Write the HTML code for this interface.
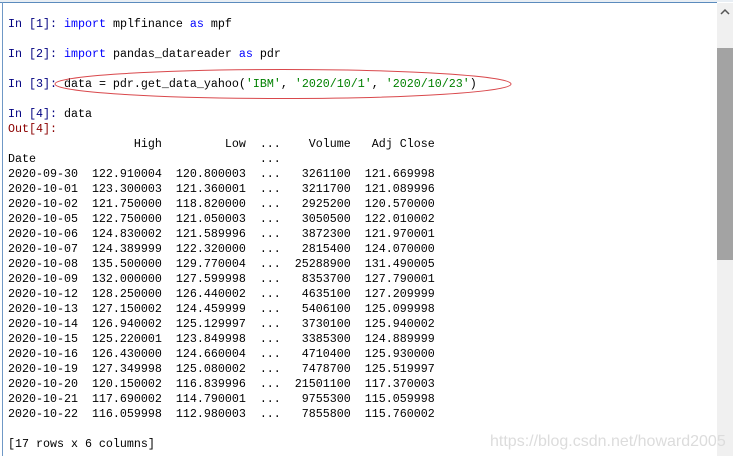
<!DOCTYPE html>
<html><head><meta charset="utf-8"><style>
html,body{margin:0;padding:0;background:#fff;width:733px;height:456px;overflow:hidden;position:relative}
.top{position:absolute;left:0;top:0;width:733px;height:2px;background:#e8eef4}
.topl{position:absolute;left:0;top:2px;width:717px;height:1px;background:#5b8bbd}
.left{position:absolute;left:2px;top:2px;width:1px;height:454px;background:#6f98c6}
.sb{position:absolute;left:717px;top:3px;width:16px;height:453px;background:#f0f0f0}
.thumb{position:absolute;left:717px;top:48px;width:16px;height:212px;background:#a3a3a3}
pre{position:absolute;left:8px;top:17px;margin:0;font-family:"Liberation Mono",monospace;font-size:11.67px;line-height:15px;color:#000}
.p{color:#000080}.k{color:#0000ff}.s{color:#008000}.o{color:#8b0000}
.wm{position:absolute;left:490px;top:433px;font-family:"Liberation Sans",sans-serif;font-size:16px;color:#dcdcdc}
</style></head><body>
<div class="top"></div><div class="topl"></div><div class="left"></div>
<div class="sb"></div><div class="thumb"></div>
<svg style="position:absolute;left:717px;top:6px" width="16" height="12"><path d="M4 8 L8 4 L12 8" stroke="#555" stroke-width="1.5" fill="none"/></svg>
<pre><span class="p">In [1]:</span> <span class="k">import</span> mplfinance <span class="k">as</span> mpf

<span class="p">In [2]:</span> <span class="k">import</span> pandas_datareader <span class="k">as</span> pdr

<span class="p">In [3]:</span> data = pdr.get_data_yahoo(<span class="s">'IBM'</span>, <span class="s">'2020/10/1'</span>, <span class="s">'2020/10/23'</span>)

<span class="p">In [4]:</span> data
<span class="o">Out[4]:</span>
                  High         Low  ...    Volume   Adj Close
Date                                ...
2020-09-30  122.910004  120.800003  ...   3261100  121.669998
2020-10-01  123.300003  121.360001  ...   3211700  121.089996
2020-10-02  121.750000  118.820000  ...   2925200  120.570000
2020-10-05  122.750000  121.050003  ...   3050500  122.010002
2020-10-06  124.830002  121.589996  ...   3872300  121.970001
2020-10-07  124.389999  122.320000  ...   2815400  124.070000
2020-10-08  135.500000  129.770004  ...  25288900  131.490005
2020-10-09  132.000000  127.599998  ...   8353700  127.790001
2020-10-12  128.250000  126.440002  ...   4635100  127.209999
2020-10-13  127.150002  124.459999  ...   5406100  125.099998
2020-10-14  126.940002  125.129997  ...   3730100  125.940002
2020-10-15  125.220001  123.849998  ...   3385300  124.889999
2020-10-16  126.430000  124.660004  ...   4710400  125.930000
2020-10-19  127.349998  125.080002  ...   7478700  125.519997
2020-10-20  120.150002  116.839996  ...  21501100  117.370003
2020-10-21  117.690002  114.790001  ...   9755300  115.059998
2020-10-22  116.059998  112.980003  ...   7855800  115.760002

[17 rows x 6 columns]</pre>
<svg style="position:absolute;left:0;top:0" width="733" height="456"><ellipse cx="283" cy="84" rx="228" ry="14.5" fill="none" stroke="#d9484c" stroke-width="1"/></svg>
<div class="wm">https://blog.csdn.net/howard2005</div>
</body></html>
